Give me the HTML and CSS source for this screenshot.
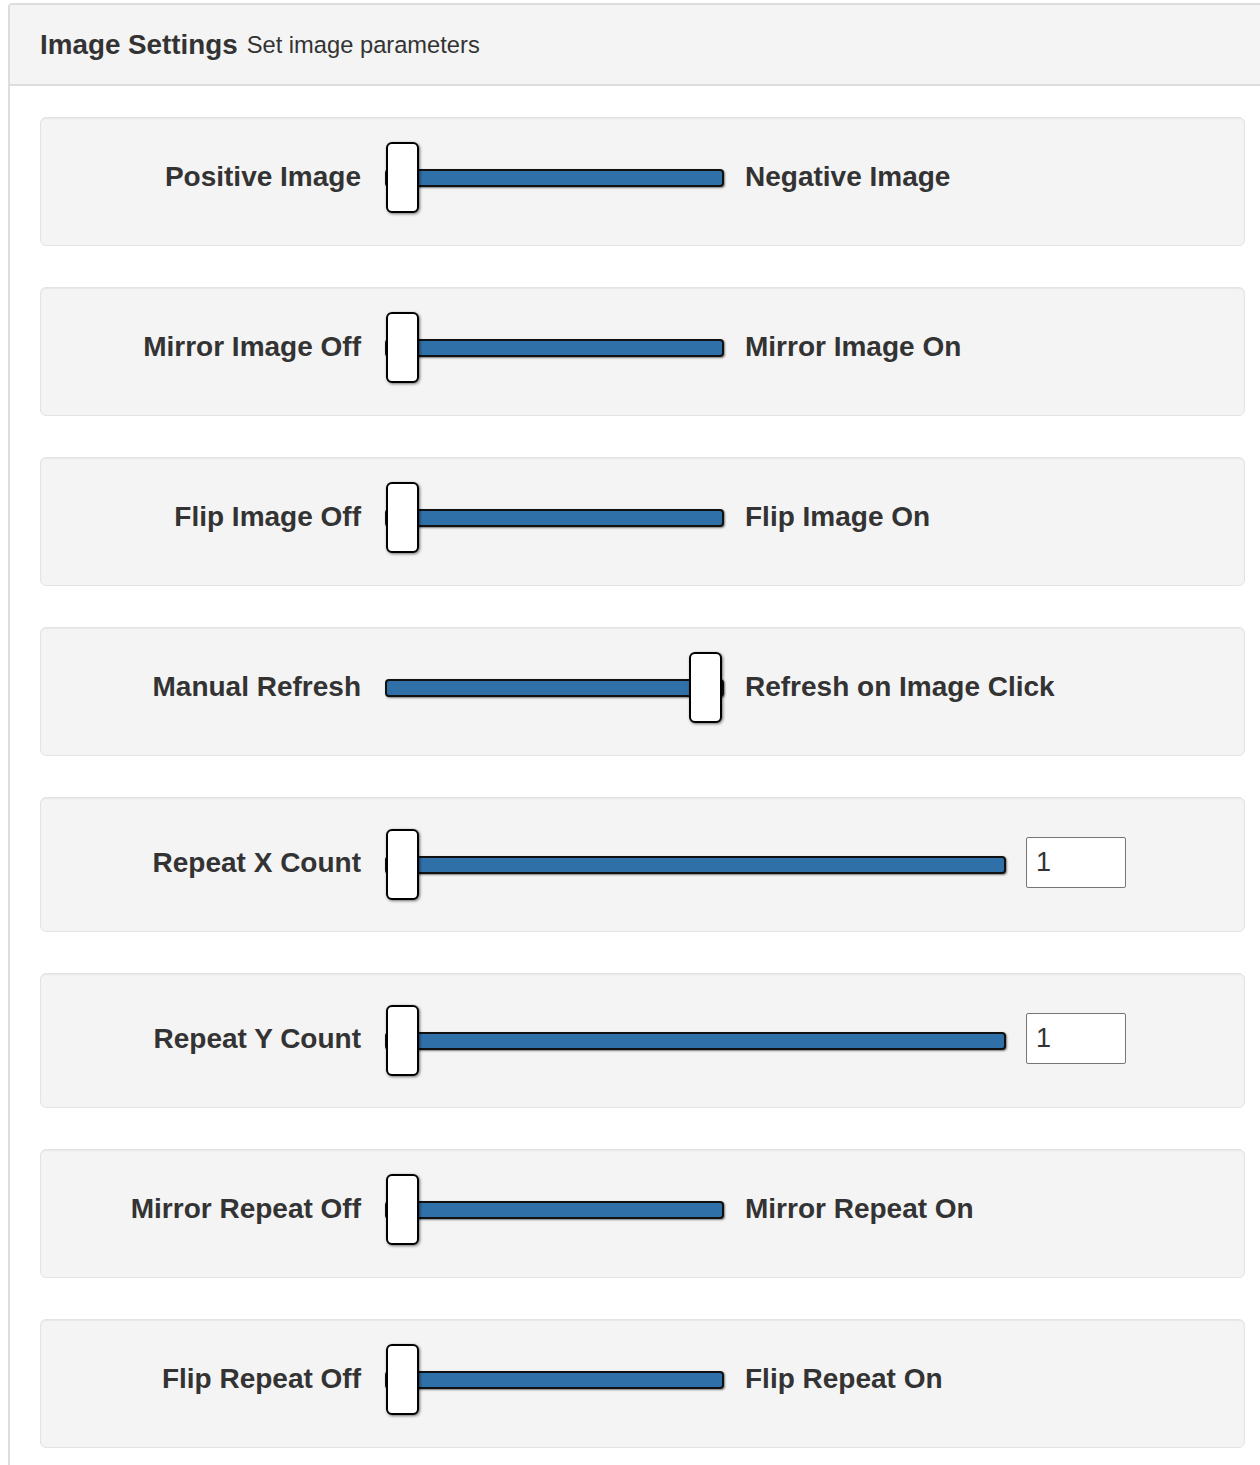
FILE: index.html
```html
<!DOCTYPE html>
<html>
<head>
<meta charset="utf-8">
<title>Image Settings</title>
<link rel="stylesheet" href="styles.css">
</head>
<body>
<div class="panel">
  <div class="panel-heading">
    <span class="panel-title">Image Settings</span>
    <span class="panel-sub">Set image parameters</span>
  </div>
  <div class="panel-body">
    <div class="well">
      <div class="label-left">Positive Image</div>
      <div class="slider short"><div class="track"></div><div class="handle"></div></div>
      <div class="label-right">Negative Image</div>
    </div>
    <div class="well">
      <div class="label-left">Mirror Image Off</div>
      <div class="slider short"><div class="track"></div><div class="handle"></div></div>
      <div class="label-right">Mirror Image On</div>
    </div>
    <div class="well">
      <div class="label-left">Flip Image Off</div>
      <div class="slider short"><div class="track"></div><div class="handle"></div></div>
      <div class="label-right">Flip Image On</div>
    </div>
    <div class="well">
      <div class="label-left">Manual Refresh</div>
      <div class="slider short"><div class="track"></div><div class="handle on"></div></div>
      <div class="label-right">Refresh on Image Click</div>
    </div>
    <div class="well tall">
      <div class="label-left">Repeat X Count</div>
      <div class="slider long"><div class="track"></div><div class="handle"></div></div>
      <input class="count" type="text" value="1">
    </div>
    <div class="well tall">
      <div class="label-left">Repeat Y Count</div>
      <div class="slider long"><div class="track"></div><div class="handle"></div></div>
      <input class="count" type="text" value="1">
    </div>
    <div class="well">
      <div class="label-left">Mirror Repeat Off</div>
      <div class="slider short"><div class="track"></div><div class="handle"></div></div>
      <div class="label-right">Mirror Repeat On</div>
    </div>
    <div class="well">
      <div class="label-left">Flip Repeat Off</div>
      <div class="slider short"><div class="track"></div><div class="handle"></div></div>
      <div class="label-right">Flip Repeat On</div>
    </div>
  </div>
</div>
</body>
</html>
```
FILE: styles.css
```css
html, body {
  overflow: hidden;
}
body {
  margin: 3px 0 0 8px;
  font-family: "Liberation Sans", Arial, sans-serif;
  color: #333;
  background: #fff;
}
.panel {
  width: 1269px;
  box-sizing: border-box;
  border: 2px solid #ddd;
  border-radius: 4px;
  background: #fff;
}
.panel-heading {
  height: 79px;
  background: #f4f4f4;
  border-bottom: 2px solid #ddd;
  border-radius: 3px 3px 0 0;
  padding: 0 30px;
  display: flex;
  align-items: center;
  white-space: nowrap;
}
.panel-title {
  font-size: 27.8px;
  font-weight: bold;
  color: #333;
}
.panel-sub {
  font-size: 23.7px;
  color: #333;
  margin-left: 9px;
  position: relative;
  top: 1px;
}
.panel-body {
  padding: 31px 30px 30px 30px;
  display: flex;
  flex-direction: column;
  gap: 41px;
}
.well {
  box-sizing: border-box;
  height: 129px;
  padding: 24px 0 32px 0;
  background: #f4f4f4;
  border: 1px solid #e3e3e3;
  border-radius: 6px;
  box-shadow: inset 0 1px 1px rgba(0, 0, 0, 0.05);
  display: flex;
  align-items: center;
}
.well.tall {
  height: 135px;
  padding: 30px 0 31px 0;
}
.label-left {
  width: 320px;
  text-align: right;
  font-size: 28px;
  font-weight: bold;
  white-space: nowrap;
  margin-right: 24px;
  margin-bottom: 2px;
}
.label-right {
  font-size: 28px;
  font-weight: bold;
  white-space: nowrap;
  margin-left: 21px;
  margin-bottom: 2px;
}
.slider {
  position: relative;
  height: 71px;
  display: flex;
  align-items: center;
}
.slider.short {
  width: 339px;
}
.slider.long {
  width: 621px;
}
.track {
  width: 100%;
  height: 18px;
  margin-top: 1px;
  box-sizing: border-box;
  background: #3070a8;
  border: 2px solid #111;
  border-radius: 4px;
  box-shadow: 1px 1px 2px rgba(0, 0, 0, 0.5);
}
.handle {
  position: absolute;
  top: 0;
  left: 1px;
  width: 33px;
  height: 71px;
  box-sizing: border-box;
  background: #fff;
  border: 2px solid #000;
  border-radius: 6px;
  box-shadow: 1px 1px 3px rgba(0, 0, 0, 0.55);
}
.handle.on {
  left: auto;
  right: 2px;
}
.count {
  margin-left: 20px;
  margin-bottom: 3px;
  width: 100px;
  height: 51px;
  box-sizing: border-box;
  border: 1px solid #767676;
  border-radius: 2px;
  background: #fff;
  padding: 0 0 0 9px;
  font-family: "Liberation Sans", Arial, sans-serif;
  font-size: 27px;
  color: #333;
  outline: none;
}
```
